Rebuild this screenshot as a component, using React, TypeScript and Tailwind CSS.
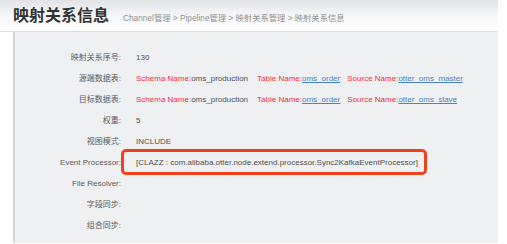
import React from "react";

const font = { fontFamily: '"Liberation Sans", "Noto Sans CJK SC", sans-serif' };

function Row({ label, children }: { label: string; children?: React.ReactNode }) {
  return (
    <div className="flex h-[21px] items-center">
      <div className="w-[106px] shrink-0 text-right text-[#5e5e5e]">{label}</div>
      <div className="ml-[15px] flex items-center whitespace-nowrap text-[#505050]">{children}</div>
    </div>
  );
}

function Table({ src }: { src: string }) {
  return (
    <>
      <span className="text-[#f0303c]">Schema Name:</span>
      <span>oms_production</span>
      <span className="ml-[9px] text-[#f0303c]">Table Name:</span>
      <span className="text-[#4a82cc] underline">oms_order</span>
      <span className="ml-[7px] text-[#f0303c]">Source Name:</span>
      <span className="text-[#4a82cc] underline">{src}</span>
    </>
  );
}

export default function App() {
  return (
    <div className="h-[244px] w-[507px] bg-white text-[8px] leading-none" style={font}>
      <div className="flex h-[32px] w-[498px] items-center border-b border-[#dcdde0] bg-gradient-to-b from-[#e1e3e7] via-[#f6f7f8] to-white">
        <div className="ml-[13px] text-[16px] font-bold text-[#333]">映射关系信息</div>
        <div className="ml-[14px] mt-[5px] text-[8.3px] text-[#909090]">
          Channel管理 &gt; Pipeline管理 &gt; 映射关系管理 &gt; 映射关系信息
        </div>
      </div>
      <div className="ml-[13px] h-[211px] w-[485px] border-l-2 border-[#d4d5d8] bg-[#eff0f2] pt-[15px]">
        <Row label="映射关系序号:">130</Row>
        <Row label="源端数据表:">
          <Table src="otter_oms_master" />
        </Row>
        <Row label="目标数据表:">
          <Table src="otter_oms_slave" />
        </Row>
        <Row label="权重:">5</Row>
        <Row label="视图模式:">INCLUDE</Row>
        <div className="relative">
          <Row label="Event Processor:">
            [CLAZZ : com.alibaba.otter.node.extend.processor.Sync2KafkaEventProcessor]
          </Row>
          <div className="pointer-events-none absolute left-[106px] top-[-3px] h-[26px] w-[306px] rounded-[5px] border-[3px] border-[#f2401c]" />
        </div>
        <Row label="File Resolver:" />
        <Row label="字段同步:" />
        <Row label="组合同步:" />
      </div>
    </div>
  );
}
